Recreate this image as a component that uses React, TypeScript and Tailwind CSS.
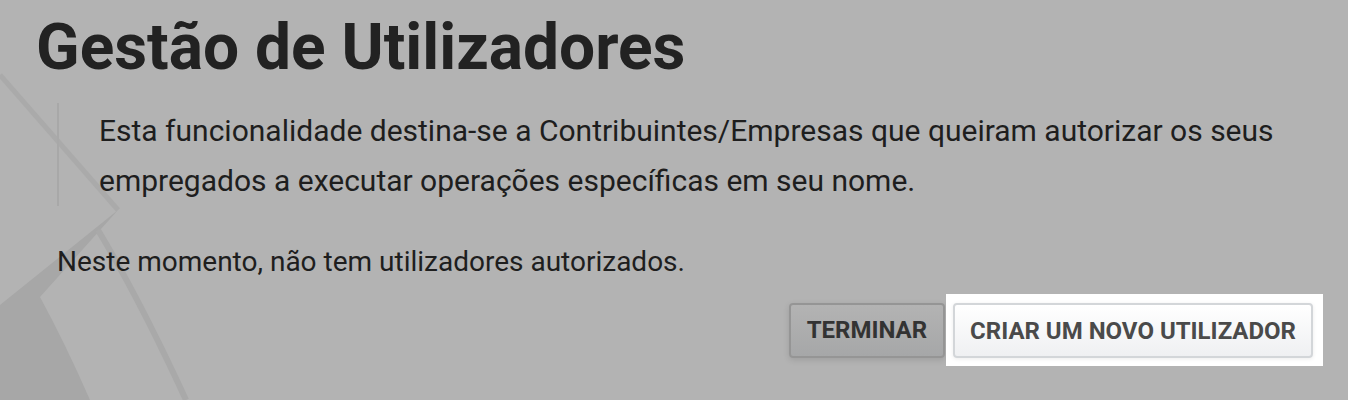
export default function App() {
  return (
    <div className="relative min-h-[400px] w-full overflow-hidden bg-[#b3b3b3] font-['Roboto',sans-serif]">
      {/* faint watermark behind the content */}
      <svg
        className="pointer-events-none absolute left-0 top-0"
        width="200"
        height="400"
        viewBox="0 0 200 400"
        fill="none"
      >
        <path d="M0 75 L118 210" stroke="#aaaaaa" strokeWidth="5" />
        <path d="M118 210 L40 297 Q66 345 90 400 L0 400 L0 305 Z" fill="#a7a7a7" />
        <path d="M98 230 Q140 300 186 400" stroke="#a9a9a9" strokeWidth="6" />
      </svg>

      <div className="relative pl-[36px] pr-[25px]">
        <h1 className="pt-[13px] text-[64px] font-bold leading-[70px] text-[#222222]">
          Gestão de Utilizadores
        </h1>

        <div className="pl-[21px]">
          <blockquote className="mt-[20px] border-l-2 border-[#a8a8a8] pl-[40px] pt-[3px] text-[30px] leading-[50px] text-[#1e1e1e]">
            Esta funcionalidade destina-se a Contribuintes/Empresas que queiram autorizar os seus
            empregados a executar operações específicas em seu nome.
          </blockquote>

          <p className="mt-[36px] text-[28px] leading-[40px] text-[#1e1e1e]">
            Neste momento, não tem utilizadores autorizados.
          </p>
        </div>

        <div className="mt-[12px] flex items-center justify-end">
          <button className="h-[55px] rounded-[4px] border-2 border-[#959595] bg-gradient-to-b from-[#b3b3b3] to-[#a6a7a8] px-[16px] text-[24px] font-bold uppercase text-[#333333] shadow-[0_2px_6px_rgba(0,0,0,0.12)]">
            Terminar
          </button>
          <div className="ml-[1px] bg-white pb-[8px] pl-[7px] pr-[10px] pt-[9px]">
            <button className="h-[55px] rounded-[4px] border-2 border-[#d3d6d9] bg-gradient-to-b from-white to-[#eff0f2] px-[15px] text-[24px] font-bold uppercase text-[#4a4a4a] shadow-[0_1px_4px_rgba(0,0,0,0.08)]">
              Criar um novo utilizador
            </button>
          </div>
        </div>
      </div>
    </div>
  )
}
